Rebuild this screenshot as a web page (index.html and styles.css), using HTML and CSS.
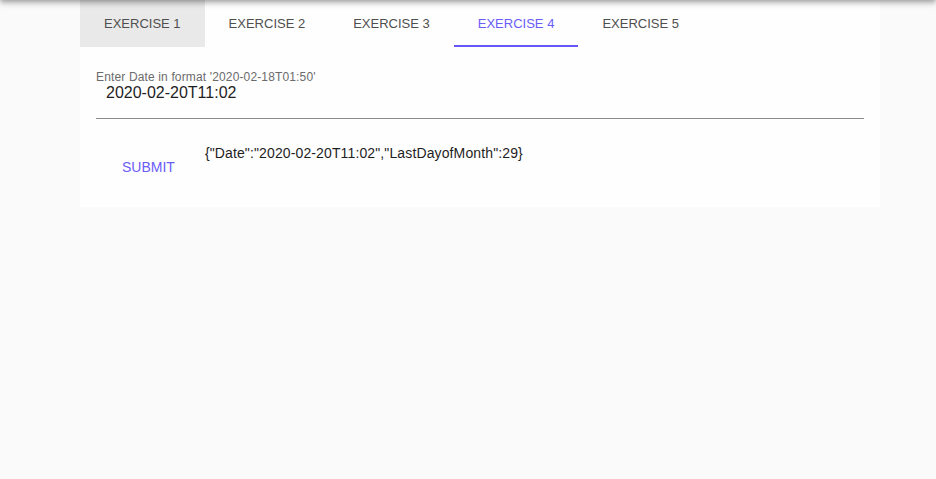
FILE: index.html
```html
<!DOCTYPE html>
<html lang="en">
<head>
<meta charset="utf-8">
<title>Exercises</title>
<link rel="stylesheet" href="styles.css">
</head>
<body>
<div class="appbar-edge"></div>
<main class="paper">
  <nav class="tabs">
    <div class="tab tab-focus">EXERCISE 1</div>
    <div class="tab">EXERCISE 2</div>
    <div class="tab">EXERCISE 3</div>
    <div class="tab tab-active">EXERCISE 4</div>
    <div class="tab">EXERCISE 5</div>
  </nav>
  <section class="panel">
    <div class="field">
      <label class="field-label">Enter Date in format '2020-02-18T01:50'</label>
      <div class="field-input">2020-02-20T11:02</div>
    </div>
    <div class="row">
      <button class="submit">SUBMIT</button>
      <div class="result">{"Date":"2020-02-20T11:02","LastDayofMonth":29}</div>
    </div>
  </section>
</main>
</body>
</html>
```

FILE: styles.css
```css
html, body {
  margin: 0;
  padding: 0;
}
body {
  background: #fafafa;
  font-family: "Liberation Sans", Arial, sans-serif;
  color: #222;
  height: 479px;
  overflow: hidden;
}
.appbar-edge {
  position: relative;
  z-index: 2;
  height: 20px;
  margin-top: -20px;
  background: #fafafa;
  box-shadow: 0 2px 4px -1px rgba(0,0,0,.2), 0 4px 5px 0 rgba(0,0,0,.14), 0 1px 10px 0 rgba(0,0,0,.12);
}
.paper {
  width: 800px;
  margin: 0 80px;
  background: #fefefe;
}
.tabs {
  display: flex;
  height: 47px;
}
.tab {
  width: 124.6px;
  height: 47px;
  box-sizing: border-box;
  display: flex;
  align-items: center;
  justify-content: center;
  font-size: 13px;
  color: #4f4f4f;
}
.tab-focus {
  background: #e9e9e9;
}
.tab-active {
  color: #6a5cf6;
  border-bottom: 2px solid #6556f5;
  padding-top: 2px;
}
.panel {
  padding: 23px 16px 24px;
}
.field {
  border-bottom: 1px solid #8c8c8c;
}
.field-label {
  display: block;
  font-size: 12px;
  line-height: 14px;
  letter-spacing: 0.012em;
  color: #6b6b6b;
}
.field-input {
  font-size: 16px;
  line-height: 17px;
  padding: 0 0 17px 10px;
  color: #1e1e1e;
}
.row {
  display: flex;
  align-items: flex-start;
  margin-top: 24px;
}
.submit {
  margin: 8px 0 0 10px;
  padding: 6px 16px;
  border: none;
  background: transparent;
  font-family: inherit;
  font-size: 14px;
  line-height: 20px;
  color: #6a5cf6;
  cursor: pointer;
}
.result {
  margin-left: 14px;
  font-size: 14px;
  line-height: 20px;
  letter-spacing: 0.009em;
  color: #1e1e1e;
}
```
